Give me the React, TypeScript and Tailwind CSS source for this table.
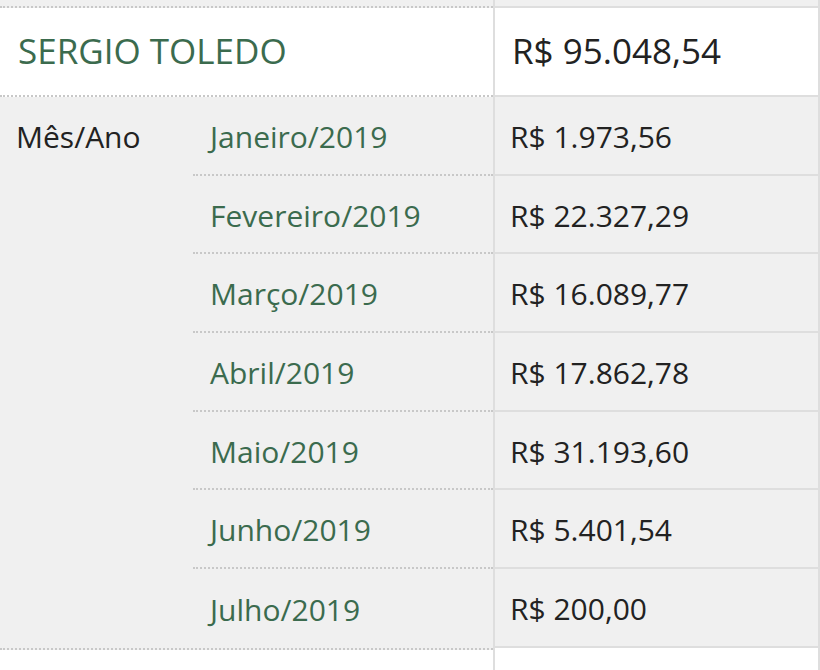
const months = [
  { label: "Janeiro/2019", value: "R$ 1.973,56" },
  { label: "Fevereiro/2019", value: "R$ 22.327,29" },
  { label: "Março/2019", value: "R$ 16.089,77" },
  { label: "Abril/2019", value: "R$ 17.862,78" },
  { label: "Maio/2019", value: "R$ 31.193,60" },
  { label: "Junho/2019", value: "R$ 5.401,54" },
  { label: "Julho/2019", value: "R$ 200,00" },
];

function App() {
  return (
    <div className="w-[820px] h-[670px] overflow-hidden bg-white font-['Open_Sans',sans-serif] text-[#222]">
      {/* previous row tail */}
      <div className="flex h-[8px]">
        <div className="w-[493px] bg-[#f0f0f0] border-b-2 border-dotted border-[#c8c8c8]"></div>
        <div className="flex-1 bg-[#f0f0f0] border-x-2 border-b-2 border-[#dedede]"></div>
      </div>

      {/* header */}
      <div className="flex h-[89px]">
        <div className="w-[493px] flex items-center pl-[18px] border-b-2 border-dotted border-[#c8c8c8]">
          <span className="text-[35px] text-[#3b6b4e]">SERGIO TOLEDO</span>
        </div>
        <div className="flex-1 flex items-center pl-[17px] border-x-2 border-b-2 border-[#dedede]">
          <span className="text-[35px]">R$ 95.048,54</span>
        </div>
      </div>

      {/* months */}
      <div className="flex">
        <div className="w-[493px] flex bg-[#f0f0f0] border-b-2 border-dotted border-[#c8c8c8]">
          <div className="w-[193px] pl-[16px] pt-[17px] text-[30px]">Mês/Ano</div>
          <div className="flex-1 flex flex-col">
            {months.map((m, i) => (
              <div
                key={m.label}
                className={
                  "h-[78.7px] flex items-center pl-[17px] pt-[2px] text-[30px] text-[#3b6b4e] " +
                  (i < months.length - 1 ? "border-b-2 border-dotted border-[#c8c8c8]" : "")
                }
              >
                {m.label}
              </div>
            ))}
          </div>
        </div>
        <div className="flex-1 flex flex-col border-x-2 border-[#dedede]">
          {months.map((m) => (
            <div
              key={m.label}
              className="h-[78.7px] flex items-center pl-[15px] pt-[2px] bg-[#f0f0f0] border-b-2 border-[#dedede] text-[30px]"
            >
              {m.value}
            </div>
          ))}
        </div>
      </div>

      {/* next row start */}
      <div className="flex h-[40px]">
        <div className="w-[493px]"></div>
        <div className="flex-1 border-x-2 border-[#dedede]"></div>
      </div>
    </div>
  );
}

export default App;
